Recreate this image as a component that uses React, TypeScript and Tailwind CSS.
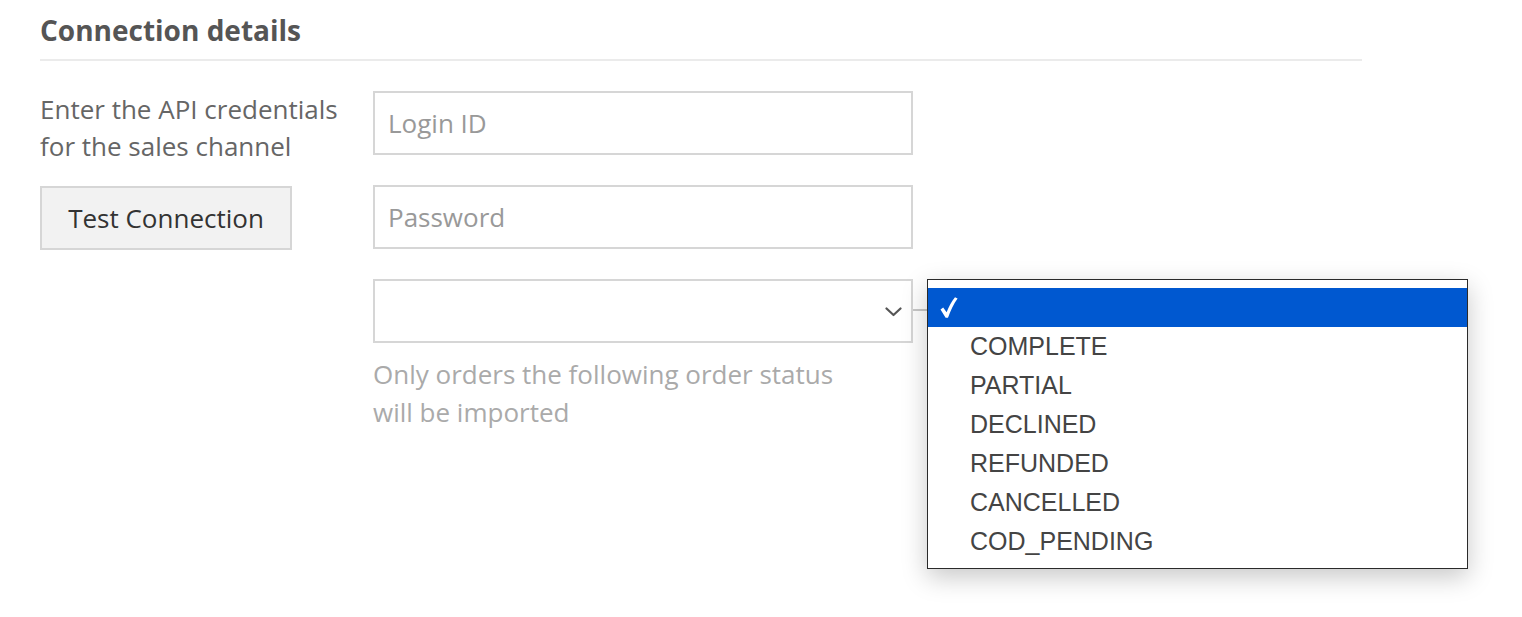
const statuses = ['COMPLETE', 'PARTIAL', 'DECLINED', 'REFUNDED', 'CANCELLED', 'COD_PENDING']

export default function App() {
  return (
    <div className="min-h-screen bg-white font-['Open_Sans',sans-serif]">
      <div className="w-[1362px] pl-10 pt-[12px]">
        <h2 className="border-b-2 border-[#ebebeb] pb-[10px] text-[28px] font-bold leading-[37px] text-[#555]">
          Connection details
        </h2>

        <div className="mt-[30px] grid grid-cols-[333px_540px]">
          <div className="flex flex-col">
            <p className="text-[26px] leading-[37px] text-[#666]">
              Enter the API credentials
              <br />
              for the sales channel
            </p>
            <button
              type="button"
              className="mt-[21px] h-16 w-[252px] border-2 border-[#d6d6d6] bg-[#f2f2f2] text-[26px] text-[#333]"
            >
              Test Connection
            </button>
          </div>

          <div className="flex flex-col gap-[30px]">
            <input
              placeholder="Login ID"
              className="h-16 w-full border-2 border-[#d6d6d6] px-[13px] text-[26px] text-[#333] outline-none placeholder:text-[#999]"
            />
            <input
              placeholder="Password"
              className="h-16 w-full border-2 border-[#d6d6d6] px-[13px] text-[26px] text-[#333] outline-none placeholder:text-[#999]"
            />
            <div className="relative">
              <div className="flex h-16 w-full items-center justify-end border-2 border-[#d6d6d6] pr-[9px]">
                <svg width="17" height="10" viewBox="0 0 17 10" fill="none" className="mt-[2px]">
                  <path d="M1.5 1.5 L8.5 8 L15.5 1.5" stroke="#555" strokeWidth="2.2" strokeLinecap="round" strokeLinejoin="round" />
                </svg>
              </div>
              <p className="mt-[12px] text-[26px] leading-[38px] text-[#aaa]">
                Only orders the following order status
                <br />
                will be imported
              </p>

              <div className="absolute left-[540px] top-[30px] h-[2px] w-[15px] bg-[#c8c8c8]" />

              <div className="absolute left-[554px] top-0 w-[541px] border border-[#2a2a2a] bg-white pb-[7px] pt-[8px] font-['Liberation_Sans',Arial,sans-serif] shadow-[0_8px_24px_rgba(0,0,0,0.22)]">
                <div className="flex h-[39px] items-center bg-[#0058d0] pl-[12px]">
                  <svg width="18" height="21" viewBox="0 0 18 21" fill="white">
                    <path d="M0.5 12.5 L3.2 10.6 L6.6 15.2 C9 9.5 11.6 4.4 15 0.3 L17.6 1.6 C13.6 7 10.6 13.6 8 20.8 L5.6 20.8 Z" />
                  </svg>
                </div>
                {statuses.map((s) => (
                  <div key={s} className="flex h-[39px] items-center pl-[42px] text-[25px] text-[#444]">
                    {s}
                  </div>
                ))}
              </div>
            </div>
          </div>
        </div>
      </div>
    </div>
  )
}
